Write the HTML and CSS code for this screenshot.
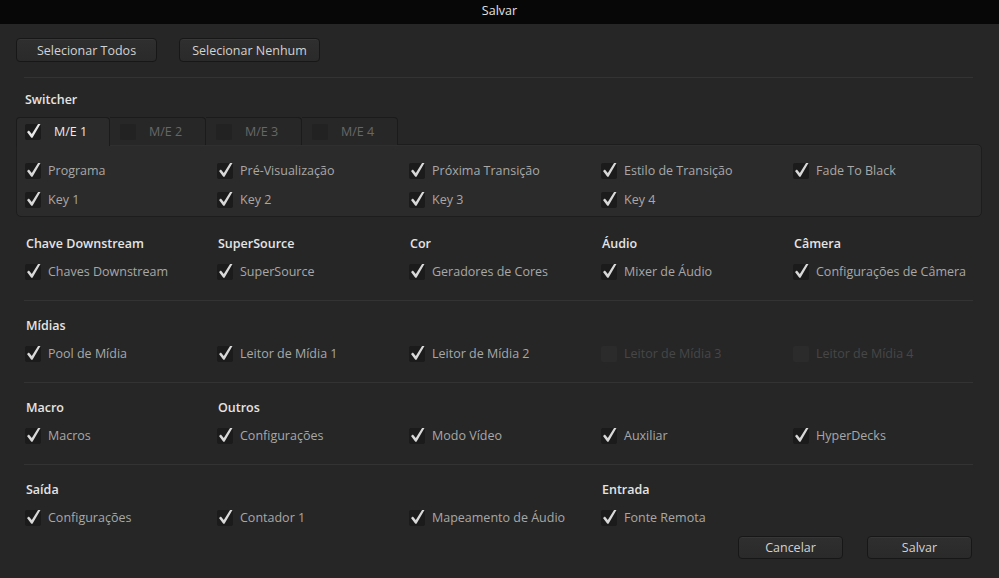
FILE: index.html
```html
<!DOCTYPE html>
<html lang="pt">
<head>
<meta charset="utf-8">
<title>Salvar</title>
<link rel="stylesheet" href="styles.css">
</head>
<body>
<svg width="0" height="0" class="defs">
  <defs>
    <symbol id="chk" viewBox="0 0 16 16">
      <path d="M2 8.1 L3.9 6.6 L6.8 10 L14 -1.5 L15.7 -0.4 L7.5 13.8 L6.3 13.8 Z" fill="currentColor"/>
    </symbol>
  </defs>
</svg>

<div class="titlebar">Salvar</div>

<div class="toolbar">
  <button class="btn btn-wide">Selecionar Todos</button>
  <button class="btn btn-wide">Selecionar Nenhum</button>
</div>

<div class="content">
  <div class="sep"></div>

  <section class="switcher">
    <h2 class="heading">Switcher</h2>
    <div class="tabs">
      <div class="tab active"><span class="cb on"><svg><use href="#chk"/></svg></span><span class="tab-label">M/E 1</span></div>
      <div class="tab"><span class="cb"></span><span class="tab-label">M/E 2</span></div>
      <div class="tab"><span class="cb"></span><span class="tab-label">M/E 3</span></div>
      <div class="tab"><span class="cb"></span><span class="tab-label">M/E 4</span></div>
    </div>
    <div class="panel">
      <div class="grid grid-panel">
        <label class="item"><span class="cb on"><svg><use href="#chk"/></svg></span>Programa</label>
        <label class="item"><span class="cb on"><svg><use href="#chk"/></svg></span>Pré-Visualização</label>
        <label class="item"><span class="cb on"><svg><use href="#chk"/></svg></span>Próxima Transição</label>
        <label class="item"><span class="cb on"><svg><use href="#chk"/></svg></span>Estilo de Transição</label>
        <label class="item"><span class="cb on"><svg><use href="#chk"/></svg></span>Fade To Black</label>
        <label class="item"><span class="cb on"><svg><use href="#chk"/></svg></span>Key 1</label>
        <label class="item"><span class="cb on"><svg><use href="#chk"/></svg></span>Key 2</label>
        <label class="item"><span class="cb on"><svg><use href="#chk"/></svg></span>Key 3</label>
        <label class="item"><span class="cb on"><svg><use href="#chk"/></svg></span>Key 4</label>
      </div>
    </div>
  </section>

  <section class="group first-group">
    <div class="grid">
      <h2 class="heading">Chave Downstream</h2>
      <h2 class="heading">SuperSource</h2>
      <h2 class="heading">Cor</h2>
      <h2 class="heading">Áudio</h2>
      <h2 class="heading">Câmera</h2>
      <label class="item"><span class="cb on"><svg><use href="#chk"/></svg></span>Chaves Downstream</label>
      <label class="item"><span class="cb on"><svg><use href="#chk"/></svg></span>SuperSource</label>
      <label class="item"><span class="cb on"><svg><use href="#chk"/></svg></span>Geradores de Cores</label>
      <label class="item"><span class="cb on"><svg><use href="#chk"/></svg></span>Mixer de Áudio</label>
      <label class="item"><span class="cb on"><svg><use href="#chk"/></svg></span>Configurações de Câmera</label>
    </div>
  </section>
  <div class="sep"></div>

  <section class="group">
    <div class="grid">
      <h2 class="heading">Mídias</h2>
      <span></span><span></span><span></span><span></span>
      <label class="item"><span class="cb on"><svg><use href="#chk"/></svg></span>Pool de Mídia</label>
      <label class="item"><span class="cb on"><svg><use href="#chk"/></svg></span>Leitor de Mídia 1</label>
      <label class="item"><span class="cb on"><svg><use href="#chk"/></svg></span>Leitor de Mídia 2</label>
      <label class="item disabled"><span class="cb"></span>Leitor de Mídia 3</label>
      <label class="item disabled"><span class="cb"></span>Leitor de Mídia 4</label>
    </div>
  </section>
  <div class="sep"></div>

  <section class="group">
    <div class="grid">
      <h2 class="heading">Macro</h2>
      <h2 class="heading">Outros</h2>
      <span></span><span></span><span></span>
      <label class="item"><span class="cb on"><svg><use href="#chk"/></svg></span>Macros</label>
      <label class="item"><span class="cb on"><svg><use href="#chk"/></svg></span>Configurações</label>
      <label class="item"><span class="cb on"><svg><use href="#chk"/></svg></span>Modo Vídeo</label>
      <label class="item"><span class="cb on"><svg><use href="#chk"/></svg></span>Auxiliar</label>
      <label class="item"><span class="cb on"><svg><use href="#chk"/></svg></span>HyperDecks</label>
    </div>
  </section>
  <div class="sep"></div>

  <section class="group last-group">
    <div class="grid">
      <h2 class="heading">Saída</h2>
      <span></span><span></span>
      <h2 class="heading">Entrada</h2>
      <span></span>
      <label class="item"><span class="cb on"><svg><use href="#chk"/></svg></span>Configurações</label>
      <label class="item"><span class="cb on"><svg><use href="#chk"/></svg></span>Contador 1</label>
      <label class="item"><span class="cb on"><svg><use href="#chk"/></svg></span>Mapeamento de Áudio</label>
      <label class="item"><span class="cb on"><svg><use href="#chk"/></svg></span>Fonte Remota</label>
      <span></span>
    </div>
  </section>

  <div class="actions">
    <button class="btn btn-action">Cancelar</button>
    <button class="btn btn-action">Salvar</button>
  </div>
</div>
</body>
</html>
```

FILE: styles.css
```css
* { box-sizing: border-box; }

html, body {
  margin: 0;
  padding: 0;
  height: 100%;
}

body {
  background: #262626;
  font-family: "Open Sans", "Noto Sans", sans-serif;
  font-size: 12.5px;
  line-height: 18px;
  color: #a8a8a8;
  overflow: hidden;
}

.defs {
  position: absolute;
}

.titlebar {
  height: 24px;
  background: #070707;
  color: #e2e2e2;
  text-align: center;
  line-height: 22px;
  font-size: 12.5px;
}

.toolbar {
  display: flex;
  gap: 22px;
  padding: 14px 0 0 16px;
}

.btn {
  font-family: inherit;
  font-size: 12.5px;
  color: #d2d2d2;
  background: linear-gradient(#2f2f2f, #2a2a2a);
  border: 1px solid #171717;
  border-radius: 4px;
  box-shadow: inset 0 1px 0 rgba(255,255,255,0.04);
  padding: 1px 0 0;
  margin: 0;
  line-height: 20px;
}

.btn-wide {
  width: 141px;
  height: 24px;
}

.content {
  padding: 0 26px 0 24px;
}

.sep {
  height: 1px;
  background: #333333;
}

.toolbar + .content > .sep:first-child {
  margin-top: 15px;
}

.heading {
  margin: 0;
  font-size: 12.5px;
  font-weight: 600;
  line-height: 18px;
  color: #e4e4e4;
  padding-left: 1px;
}

.switcher {
  padding-top: 13px;
}

.switcher > .heading {
  margin-bottom: 8px;
}

.tabs {
  display: flex;
  margin-left: -8px;
  height: 28px;
}

.tab {
  display: flex;
  align-items: center;
  gap: 13px;
  height: 28px;
  width: 96px;
  padding-left: 10px;
  background: #272727;
  border: 1px solid #1b1b1b;
  border-bottom: none;
  border-left: none;
  border-radius: 0 4px 0 0;
  color: #676767;
}

.tab.active {
  width: 94px;
  padding-left: 8px;
  background: #2b2b2b;
  border-left: 1px solid #1b1b1b;
  border-radius: 4px 4px 0 0;
  color: #ececec;
  position: relative;
  z-index: 1;
  height: 29px;
}

.tab-label {
  line-height: 18px;
}

.panel {
  margin-left: -8px;
  margin-right: -9px;
  margin-top: -1px;
  background: #2b2b2b;
  border: 1px solid #1d1d1d;
  border-radius: 0 5px 5px 5px;
  padding: 17px 0 7px 8px;
  box-shadow: inset 0 1px 0 rgba(255,255,255,0.02);
}

.grid {
  display: grid;
  grid-template-columns: repeat(5, 192px);
  row-gap: 10px;
  padding-left: 1px;
}

.panel .grid {
  padding-left: 0;
}

.grid-panel {
  row-gap: 11px;
}

.item {
  display: flex;
  align-items: center;
  gap: 7px;
  height: 18px;
  white-space: nowrap;
  color: #a8a8a8;
}

.item.disabled {
  color: #474747;
}

.cb {
  flex: none;
  width: 16px;
  height: 16px;
  border-radius: 2px;
  background: #1b1b1b;
  position: relative;
  color: #d8d8d8;
}

.tab .cb {
  background: #222222;
}

.tab.active .cb {
  background: #1b1b1b;
  color: #e6e6e6;
}

.item.disabled .cb {
  background: #2b2b2b;
}

.cb svg {
  position: absolute;
  left: 0;
  top: 0;
  width: 16px;
  height: 16px;
  overflow: visible;
}

.group {
  padding: 16px 0 19px;
}

.first-group {
  padding-top: 18px;
  padding-bottom: 19px;
}

.last-group {
  padding-top: 16px;
  padding-bottom: 0;
}

.actions {
  display: flex;
  justify-content: flex-end;
  gap: 24px;
  margin-top: 9px;
  padding-right: 1px;
}

.btn-action {
  width: 105px;
  height: 23px;
}
```
